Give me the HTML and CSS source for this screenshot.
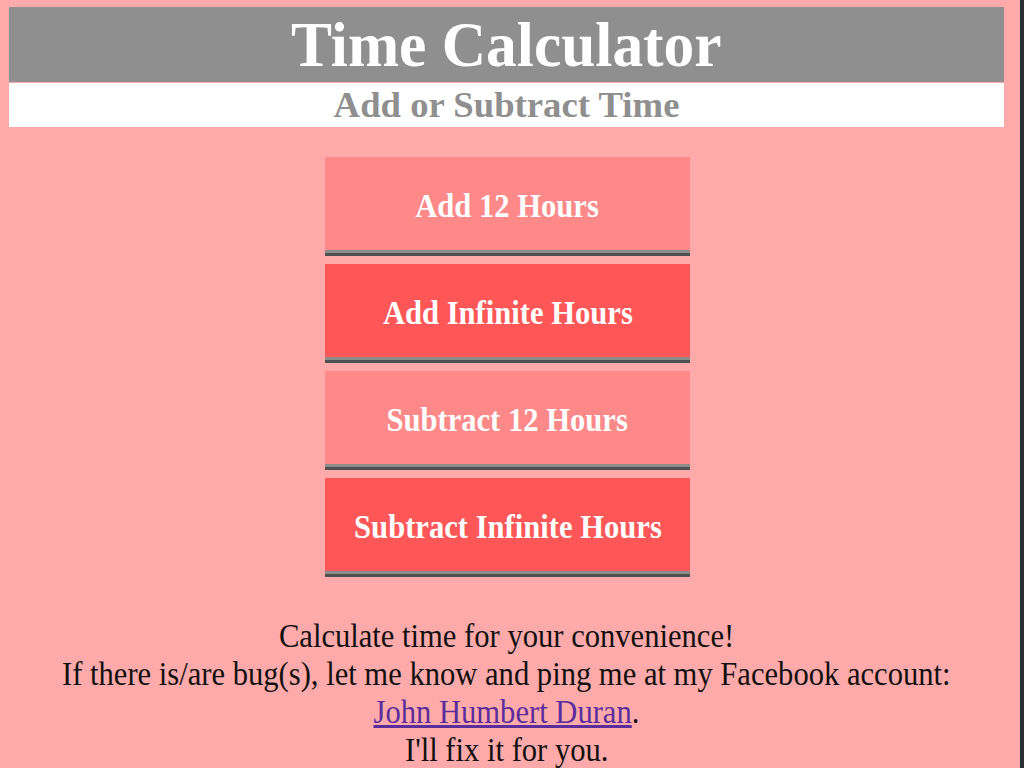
FILE: index.html
```html
<!DOCTYPE html>
<html lang="en">
<head>
<meta charset="utf-8">
<title>Time Calculator</title>
<link rel="stylesheet" href="styles.css">
</head>
<body>
<div class="page">
  <header class="masthead">
    <h1 class="title"><span class="squeeze-title">Time Calculator</span></h1>
    <h2 class="subtitle"><span class="squeeze-sub">Add or Subtract Time</span></h2>
  </header>
  <main class="buttons">
    <button class="btn btn-light"><span class="squeeze">Add 12 Hours</span></button>
    <button class="btn btn-dark"><span class="squeeze">Add Infinite Hours</span></button>
    <button class="btn btn-light"><span class="squeeze">Subtract 12 Hours</span></button>
    <button class="btn btn-dark"><span class="squeeze">Subtract Infinite Hours</span></button>
  </main>
  <footer class="note">
    <p class="line"><span class="squeeze-text">Calculate time for your convenience!</span></p>
    <p class="line"><span class="squeeze-text">If there is/are bug(s), let me know and ping me at my Facebook account:</span></p>
    <p class="line"><span class="squeeze-text"><a href="#" class="link">John Humbert Duran</a>.</span></p>
    <p class="line"><span class="squeeze-text">I'll fix it for you.</span></p>
  </footer>
</div>
</body>
</html>
```

FILE: styles.css
```css
html {
  background: #ffaaaa;
  height: 100%;
  box-sizing: border-box;
  border-right: 4px solid #2b2f34;
}
body {
  margin: 0;
  font-family: "Liberation Serif", "Times New Roman", serif;
  overflow: hidden;
}
.page {
  padding: 7px 16px 0 9px;
}
.squeeze-title {
  display: inline-block;
  transform: scaleX(0.96);
  white-space: nowrap;
}
.squeeze-sub {
  display: inline-block;
  transform: scaleX(1.02);
  white-space: nowrap;
}
.squeeze {
  display: inline-block;
  transform: scaleX(0.9);
  white-space: nowrap;
}
.squeeze-text {
  display: inline-block;
  transform: scaleX(0.927);
  white-space: nowrap;
}
.masthead {
  text-align: center;
}
.title {
  margin: 0;
  background: #8f8f8f;
  color: #fff;
  font-size: 64px;
  font-weight: bold;
  height: 75px;
  line-height: 75px;
}
.subtitle {
  margin: 1px 0 0;
  background: #fff;
  color: #8f8f8f;
  font-size: 36px;
  font-weight: bold;
  height: 44px;
  line-height: 44px;
}
.buttons {
  display: flex;
  flex-direction: column;
  align-items: center;
  gap: 8px;
  margin: 30px 0 0 2px;
}
.btn {
  width: 365px;
  height: 99px;
  border: none;
  border-bottom: 3px solid #4f5050;
  box-shadow: inset 0 -3px 0 #8c8c8c;
  padding: 2px 0 0;
  color: #fff;
  font-family: "Liberation Serif", "Times New Roman", serif;
  font-size: 34px;
  font-weight: bold;
  cursor: pointer;
}
.btn-light { background: #ff8888; }
.btn-dark { background: #ff5757; }
.note {
  margin-top: 40px;
  text-align: center;
  font-size: 33px;
  color: #111;
}
.line {
  margin: 0;
  line-height: 38px;
}
.link {
  color: #5a2d9c;
}
```
